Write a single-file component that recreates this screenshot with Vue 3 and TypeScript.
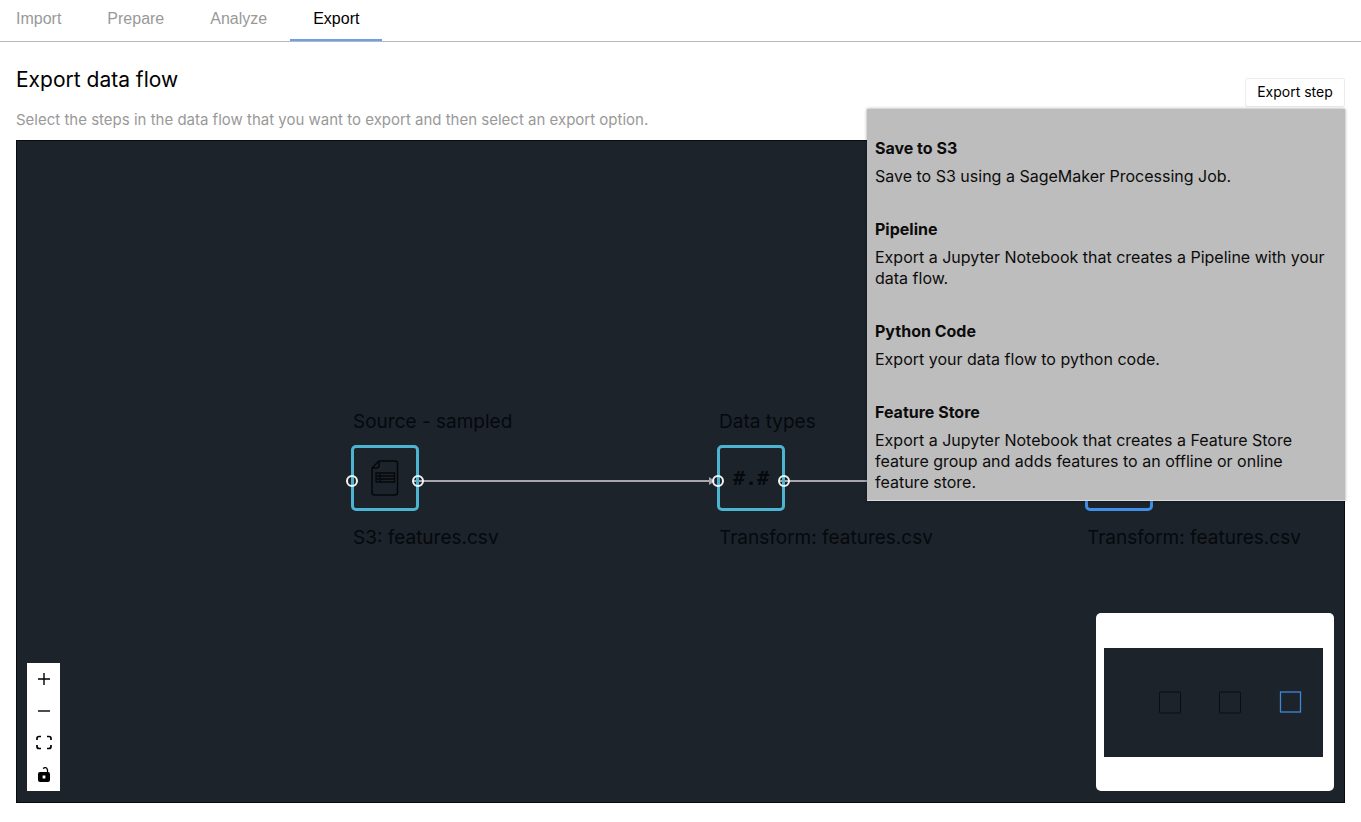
<script setup lang="ts">
import { ref } from 'vue'

interface ExportOption {
  title: string
  description: string
}

interface FlowNode {
  id: string
  title?: string
  caption: string
  kind: 'file' | 'types' | 'transform'
  x: number
}

const tabs: string[] = ['Import', 'Prepare', 'Analyze', 'Export']
const activeTab = ref('Export')
const menuOpen = ref(true)

const options: ExportOption[] = [
  { title: 'Save to S3', description: 'Save to S3 using a SageMaker Processing Job.' },
  {
    title: 'Pipeline',
    description: 'Export a Jupyter Notebook that creates a Pipeline with your data flow.',
  },
  { title: 'Python Code', description: 'Export your data flow to python code.' },
  {
    title: 'Feature Store',
    description:
      'Export a Jupyter Notebook that creates a Feature Store feature group and adds features to an offline or online feature store.',
  },
]

const nodes: FlowNode[] = [
  { id: 'source', title: 'Source - sampled', caption: 'S3: features.csv', kind: 'file', x: 334 },
  { id: 'types', title: 'Data types', caption: 'Transform: features.csv', kind: 'types', x: 700 },
  { id: 'transform', caption: 'Transform: features.csv', kind: 'transform', x: 1068 },
]
</script>

<template>
  <div class="page">
    <nav class="tabs" aria-label="Workflow">
      <button
        v-for="tab in tabs"
        :key="tab"
        type="button"
        class="tab"
        :class="{ active: tab === activeTab }"
        @click="activeTab = tab"
      >
        {{ tab }}
      </button>
    </nav>

    <main class="content">
      <header class="heading">
        <div class="intro">
          <h1>Export data flow</h1>
          <p>Select the steps in the data flow that you want to export and then select an export option.</p>
        </div>
        <div class="export">
          <button type="button" class="export-button" :aria-expanded="menuOpen" @click="menuOpen = !menuOpen">
            Export step
          </button>
          <div v-if="menuOpen" class="menu">
            <button v-for="option in options" :key="option.title" type="button" class="option">
              <strong>{{ option.title }}</strong>
              <span>{{ option.description }}</span>
            </button>
          </div>
        </div>
      </header>

      <section class="canvas" aria-label="Data flow">
        <svg class="edges" aria-hidden="true">
          <path d="M396 340H696M762 340H1062" stroke="#a9a5ad" stroke-width="2" />
          <path d="M692 336l6 4-6 4zM1060 336l6 4-6 4z" fill="#a9a5ad" />
        </svg>

        <article v-for="node in nodes" :key="node.id" class="node" :style="{ left: node.x + 'px' }">
          <h2 v-if="node.title" class="node-title">{{ node.title }}</h2>
          <div class="node-box" :class="node.kind">
            <svg v-if="node.kind === 'file'" width="28" height="36" viewBox="0 0 28 36" fill="none" stroke="#05080a">
              <path
                d="M8 1H24Q26.500 1 26.500 3.500V32.500Q26.500 35 24 35H3.500Q1 35 1 32.500V8ZM8 1V5.500Q8 8 5.500 8H1"
                stroke-width="1.500"
              />
              <path d="M5 13H23.500V22H5ZM5 16H23.500M5 19H23.500M9 13V22" stroke-width="1.300" />
            </svg>
            <span v-else-if="node.kind === 'types'" class="types-glyph">#.#</span>
            <i v-if="node.kind !== 'transform'" class="port port-in"></i>
            <i v-if="node.kind !== 'transform'" class="port port-out"></i>
          </div>
          <p class="node-caption">{{ node.caption }}</p>
        </article>

        <div class="controls">
          <button type="button" aria-label="Zoom in">
            <svg width="16" height="16" viewBox="0 0 16 16" fill="none" stroke="#000" stroke-width="1.400">
              <path d="M8 2V14M2 8H14" />
            </svg>
          </button>
          <button type="button" aria-label="Zoom out">
            <svg width="16" height="16" viewBox="0 0 16 16" fill="none" stroke="#000" stroke-width="1.400">
              <path d="M2 8H14" />
            </svg>
          </button>
          <button type="button" aria-label="Fit view">
            <svg width="16" height="16" viewBox="0 0 16 16" fill="none" stroke="#000" stroke-width="1.700">
              <path d="M1 5V3.500Q1 1.500 3 1.500H5M11 1.500H13Q15 1.500 15 3.500V5M15 10V11.500Q15 13.500 13 13.500H11M5 13.500H3Q1 13.500 1 11.500V10" />
            </svg>
          </button>
          <button type="button" aria-label="Toggle lock">
            <svg width="16" height="16" viewBox="0 0 16 16">
              <path d="M7 1.500Q10.500 -.8 11.500 3V6" fill="none" stroke="#000" stroke-width="1.300" />
              <path
                fill-rule="evenodd"
                d="M4 5H12Q14 5 14 7V13Q14 15 12 15H4Q2 15 2 13V7Q2 5 4 5ZM6.600 8.600V11.400H9.400V8.600Z"
              />
            </svg>
          </button>
        </div>

        <div class="minimap">
          <svg viewBox="0 0 219 109" fill="none" role="img" aria-label="Minimap">
            <rect width="219" height="109" fill="#1c232b" />
            <rect x="55.500" y="44" width="21" height="21" rx="1" stroke="#0b0f13" />
            <rect x="115.500" y="44" width="21" height="21" rx="1" stroke="#0b0f13" />
            <rect x="176.500" y="44" width="20" height="20" stroke="#3d87d8" stroke-width="1.300" />
          </svg>
        </div>
      </section>
    </main>
  </div>
</template>

<style>
body {
  margin: 0;
  background: #fff;
}
</style>

<style scoped>
* {
  box-sizing: border-box;
}

.page {
  display: flex;
  flex-direction: column;
  min-height: 100vh;
  color: #000;
  font-family: Inter, 'Liberation Sans', sans-serif;
}

button {
  margin: 0;
  padding: 0;
  border: 0;
  background: none;
  color: inherit;
  font: inherit;
  cursor: pointer;
}

.tabs {
  display: flex;
  height: 42px;
  border-bottom: 1px solid #b8b8b8;
}

.tab {
  height: 41px;
  padding: 0 23px 1px;
  border-bottom: 2px solid transparent;
  color: #999;
  font-family: 'Liberation Sans', Arial, sans-serif;
  font-size: 16px;
}

.tab:first-child {
  padding-left: 16px;
}

.tab.active {
  border-color: #6b9fe8;
  color: #000;
}

.content {
  display: flex;
  flex: 1;
  flex-direction: column;
  padding: 25px 16px 19px;
}

.heading {
  display: flex;
  justify-content: space-between;
  height: 73px;
}

h1 {
  margin: 0;
  font-size: 21px;
  font-weight: 400;
  line-height: 26px;
}

.intro p {
  margin: 16px 0 0;
  color: #999;
  font-size: 15px;
  line-height: 22px;
}

.export {
  position: relative;
  margin-top: 11px;
}

.export-button {
  width: 100px;
  height: 29px;
  padding-bottom: 2px;
  border: 1px solid #ececec;
  border-radius: 2px;
  background: #fff;
  font-size: 14px;
}

.menu {
  position: absolute;
  z-index: 3;
  top: 31px;
  right: 0;
  display: flex;
  flex-direction: column;
  gap: 32px;
  width: 478px;
  padding: 29px 8px 7px;
  border-bottom: 1px solid #d8d8d8;
  background: #bdbdbd;
  box-shadow: 0 0 3px rgba(0, 0, 0, 0.4);
}

.option {
  display: flex;
  flex-direction: column;
  gap: 7px;
  color: #0c0c0c;
  font-size: 16px;
  line-height: 21px;
  text-align: left;
}

.option strong {
  font-weight: 700;
}

.canvas {
  position: relative;
  flex: 1;
  min-height: 600px;
  overflow: hidden;
  border: 1px solid #080b0e;
  background: #1c232b;
}

.edges {
  position: absolute;
  width: 100%;
  height: 100%;
}

.node {
  position: absolute;
  top: 268px;
  display: grid;
  grid-template-rows: 26px 66px 26px;
  grid-template-columns: 68px;
  row-gap: 10px;
  color: #06090c;
}

.node-title,
.node-caption {
  margin: 0 0 0 2px;
  font-size: 19px;
  font-weight: 400;
  line-height: 26px;
  white-space: nowrap;
}

.node-caption {
  grid-row: 3;
  padding-top: 4px;
}

.node-box {
  position: relative;
  display: flex;
  grid-row: 2;
  align-items: center;
  justify-content: center;
  border: 3px solid #4cb4d0;
  border-radius: 5px;
}

.node-box.transform {
  border-color: #3f8fe6;
}

.types-glyph {
  font-family: 'DejaVu Sans Mono', monospace;
  font-size: 20px;
  font-weight: 700;
}

.port {
  position: absolute;
  top: 27px;
  width: 12px;
  height: 12px;
  border: 2px solid #f4f4f6;
  border-radius: 50%;
}

.port-in {
  left: -8px;
}

.port-out {
  right: -8px;
}

.controls {
  position: absolute;
  bottom: 11px;
  left: 10px;
  display: flex;
  flex-direction: column;
  width: 33px;
  background: #fff;
}

.controls button {
  display: flex;
  align-items: center;
  justify-content: center;
  height: 32px;
}

.minimap {
  position: absolute;
  right: 10px;
  bottom: 11px;
  display: flex;
  align-items: center;
  width: 238px;
  height: 178px;
  padding: 0 11px 0 8px;
  border-radius: 5px;
  background: #fff;
}

.minimap svg {
  width: 100%;
}
</style>
